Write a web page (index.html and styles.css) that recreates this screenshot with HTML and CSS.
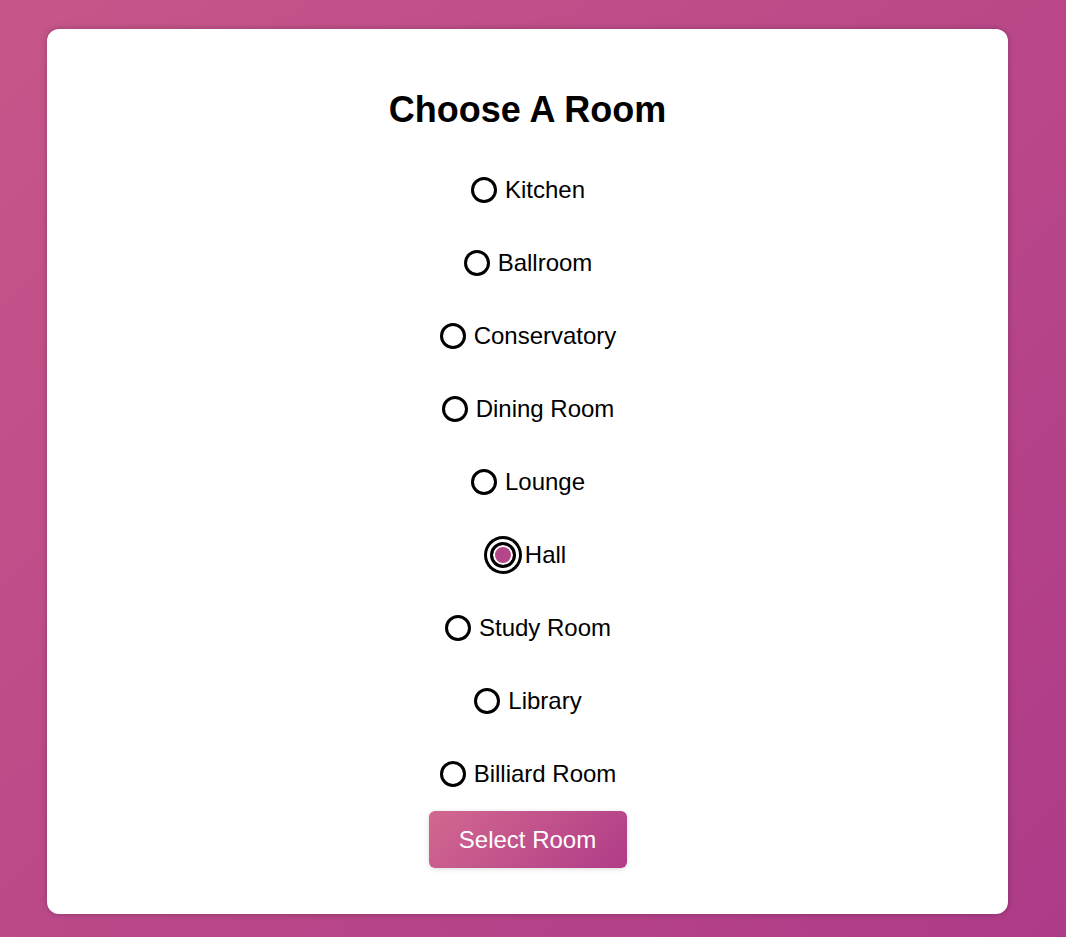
FILE: index.html
```html
<!DOCTYPE html>
<html lang="en">
<head>
<meta charset="utf-8">
<title>Choose A Room</title>
<link rel="stylesheet" href="styles.css">
</head>
<body>
<main class="card">
  <h1 class="title">Choose A Room</h1>
  <form class="room-form">
    <div class="rooms">
      <label class="room"><input type="radio" name="room" value="kitchen"><span>Kitchen</span></label>
      <label class="room"><input type="radio" name="room" value="ballroom"><span>Ballroom</span></label>
      <label class="room"><input type="radio" name="room" value="conservatory"><span>Conservatory</span></label>
      <label class="room"><input type="radio" name="room" value="dining"><span>Dining Room</span></label>
      <label class="room"><input type="radio" name="room" value="lounge"><span>Lounge</span></label>
      <label class="room"><input type="radio" name="room" value="hall" checked><span>Hall</span></label>
      <label class="room"><input type="radio" name="room" value="study"><span>Study Room</span></label>
      <label class="room"><input type="radio" name="room" value="library"><span>Library</span></label>
      <label class="room"><input type="radio" name="room" value="billiard"><span>Billiard Room</span></label>
    </div>
    <button type="button" class="select-btn">Select Room</button>
  </form>
</main>
</body>
</html>
```
FILE: styles.css
```css
* { box-sizing: border-box; }
html, body { margin: 0; height: 100%; }
body {
  background: linear-gradient(135deg, #c7568a 0%, #ae3b88 100%);
  font-family: "Liberation Sans", Arial, sans-serif;
  padding: 29px 58px 23px 47px;
  overflow: hidden;
}
.card {
  background: #fff;
  border-radius: 12px;
  box-shadow: 0 0 6px rgba(0, 0, 0, 0.25);
  height: 885px;
  padding: 40px 20px 46px;
  display: flex;
  flex-direction: column;
  align-items: center;
}
.title {
  margin: 20px 0 46px;
  font-size: 36px;
  line-height: 41px;
  font-weight: bold;
  color: #000;
}
.room-form {
  display: flex;
  flex-direction: column;
  align-items: center;
}
.rooms {
  display: flex;
  flex-direction: column;
  align-items: center;
  gap: 45px;
}
.room {
  display: flex;
  align-items: center;
  height: 28px;
  font-size: 24px;
  line-height: 28px;
  color: #000;
  padding-left: 1px;
}
.room input {
  appearance: none;
  -webkit-appearance: none;
  margin: 0 8px 0 0;
  width: 26px;
  height: 26px;
  border: 3px solid #000;
  border-radius: 50%;
  background: #fff;
  flex: none;
}
.room input:checked {
  background: #b5468a;
  box-shadow: inset 0 0 0 2px #fff, 0 0 0 3px #fff, 0 0 0 6px #000;
  margin-right: 9px;
}
.select-btn {
  margin-top: 23px;
  width: 198px;
  height: 57px;
  border: none;
  border-radius: 6px;
  background: linear-gradient(135deg, #d2688f 0%, #b03c88 100%);
  color: #fff;
  font-family: "Liberation Sans", Arial, sans-serif;
  font-size: 24px;
  box-shadow: 0 1px 5px rgba(0, 0, 0, 0.15);
  cursor: pointer;
}
```
